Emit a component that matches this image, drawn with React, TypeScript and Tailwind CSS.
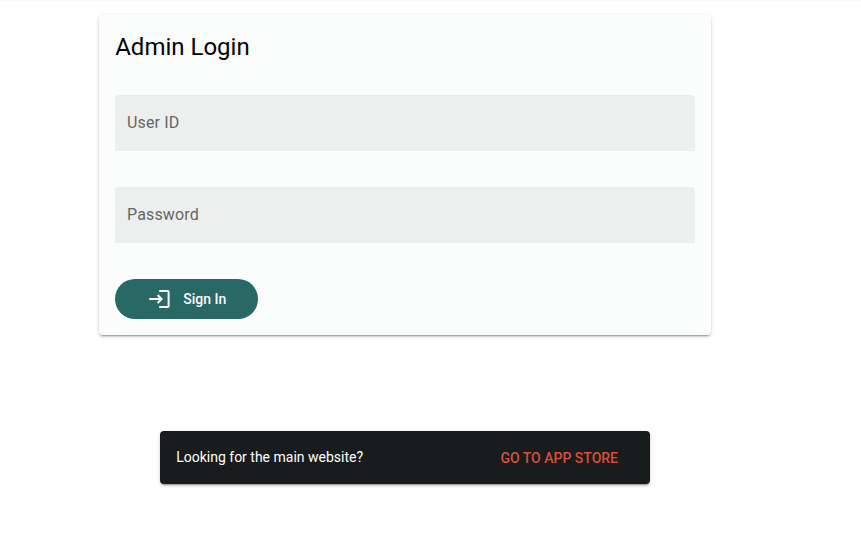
import React from "react";

function Field({ label }: { label: string }) {
  return (
    <div className="flex h-14 items-center rounded-t-[4px] bg-[#edefee] px-3 text-base tracking-[0.15px] text-[#646665]">
      <span className="-mt-px">{label}</span>
    </div>
  );
}

export default function App() {
  return (
    <div className="flex h-[555px] flex-col border-t border-[#f8f8f8] bg-white pt-[14px] font-[Roboto,sans-serif]">
      <main className="ml-[99px] h-[320px] w-[612px] rounded-[4px] bg-[#fbfdfc] px-4 shadow-[0_3px_1px_-2px_rgba(0,0,0,0.2),0_2px_2px_0_rgba(0,0,0,0.14),0_1px_5px_0_rgba(0,0,0,0.12)]">
        <h1 className="pt-4 pl-[0.2px] text-2xl leading-8 text-black">Admin Login</h1>
        <div className="mt-8 flex flex-col gap-9">
          <Field label="User ID" />
          <Field label="Password" />
        </div>
        <button className="mt-9 flex h-10 w-[143px] items-center rounded-full bg-[#296965] pl-8 text-sm font-medium text-white">
          <svg
            className="h-6 w-6 shrink-0"
            viewBox="0 0 24 24"
            fill="none"
            stroke="currentColor"
            strokeWidth="2"
          >
            <path d="M2.2 12H14.2M10.6 8l4 4-4 4" />
            <path d="M12.2 4h8.4q1 0 1 1v14q0 1-1 1h-8.4" />
          </svg>
          <span className="ml-[12.2px]">Sign In</span>
        </button>
      </main>
      <div className="mt-24 ml-40 flex h-[53px] w-[490px] items-center justify-between rounded-[4px] bg-[#191c1c] pr-8 pl-[16.2px] text-sm text-white shadow-[0_3px_1px_-2px_rgba(0,0,0,0.2),0_2px_2px_0_rgba(0,0,0,0.14),0_1px_5px_0_rgba(0,0,0,0.12)]">
        <span className="-mt-0.5">Looking for the main website?</span>
        <button className="font-medium text-[#de4d3a]">GO TO APP STORE</button>
      </div>
    </div>
  );
}
